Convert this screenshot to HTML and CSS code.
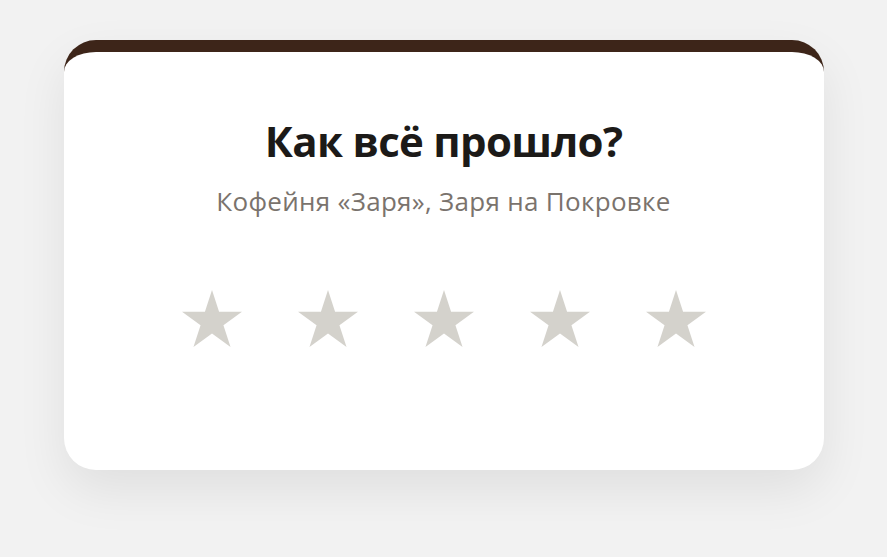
FILE: index.html
```html
<!DOCTYPE html>
<html lang="ru">
<head>
<meta charset="utf-8">
<title>Оценка</title>
<link rel="stylesheet" href="styles.css">
</head>
<body>
<div class="page">
  <section class="card">
    <h1 class="title">Как всё прошло?</h1>
    <p class="subtitle">Кофейня «Заря», Заря на Покровке</p>
    <div class="stars">
      <svg class="star" viewBox="0 0 60 57"><polygon points="30,0 37.07,21.77 59.96,21.77 41.44,35.22 48.52,56.98 30,43.53 11.48,56.98 18.56,35.22 0.04,21.77 22.93,21.77"/></svg>
      <svg class="star" viewBox="0 0 60 57"><polygon points="30,0 37.07,21.77 59.96,21.77 41.44,35.22 48.52,56.98 30,43.53 11.48,56.98 18.56,35.22 0.04,21.77 22.93,21.77"/></svg>
      <svg class="star" viewBox="0 0 60 57"><polygon points="30,0 37.07,21.77 59.96,21.77 41.44,35.22 48.52,56.98 30,43.53 11.48,56.98 18.56,35.22 0.04,21.77 22.93,21.77"/></svg>
      <svg class="star" viewBox="0 0 60 57"><polygon points="30,0 37.07,21.77 59.96,21.77 41.44,35.22 48.52,56.98 30,43.53 11.48,56.98 18.56,35.22 0.04,21.77 22.93,21.77"/></svg>
      <svg class="star" viewBox="0 0 60 57"><polygon points="30,0 37.07,21.77 59.96,21.77 41.44,35.22 48.52,56.98 30,43.53 11.48,56.98 18.56,35.22 0.04,21.77 22.93,21.77"/></svg>
    </div>
  </section>
</div>
</body>
</html>
```

FILE: styles.css
```css
html, body {
  margin: 0;
  padding: 0;
}
body {
  background: #f2f2f2;
  font-family: "Open Sans", "Noto Sans", sans-serif;
  width: 887px;
  height: 557px;
  overflow: hidden;
}
.page {
  display: flex;
  justify-content: center;
  padding-top: 40px;
}
.card {
  box-sizing: border-box;
  width: 760px;
  height: 430px;
  background: #ffffff;
  border-top: 12px solid #3d2519;
  border-radius: 32px;
  box-shadow: 0 20px 50px rgba(0, 0, 0, 0.08);
  display: flex;
  flex-direction: column;
  align-items: center;
  padding-top: 64px;
}
.title {
  margin: 0;
  font-size: 42px;
  line-height: 50px;
  font-weight: 700;
  color: #1c1a18;
  letter-spacing: -0.7px;
}
.subtitle {
  margin: 18px 0 0;
  font-size: 26px;
  line-height: 34px;
  color: #7a736d;
  letter-spacing: 0.3px;
}
.stars {
  display: flex;
  gap: 56px;
  margin-top: 72px;
}
.star {
  width: 60px;
  height: 57px;
  fill: #d4d2cc;
  display: block;
}
```
